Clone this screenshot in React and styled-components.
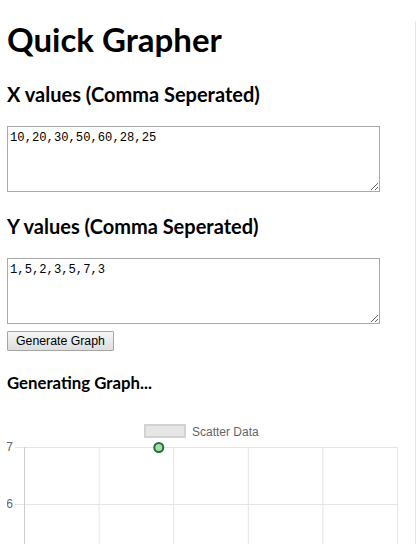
import React from 'react';
import styled, { createGlobalStyle } from 'styled-components';

const GlobalStyle = createGlobalStyle`
    html, body {
        margin : 0;
        padding : 0;
        overflow : hidden;
        background : #fff;
    }
`

const Page = styled('div')`
    width : 416px;
    height : 100vh;
    box-sizing : border-box;
    padding : 0 0 0 7px;
    border-right : 1px solid #e6e6e6;
    font-family : Lato, "Noto Sans", sans-serif;
    color : #000;
`

const Title = styled('h1')`
    margin : 21px 0 0 0;
    font-size : 33px;
    line-height : 36px;
    font-weight : 700;
`

const Heading = styled('h2')`
    margin : ${props => props.top}px 0 0 0;
    font-size : 20px;
    line-height : 24px;
    font-weight : 700;
`

const Status = styled('h3')`
    margin : 22px 0 0 0;
    font-size : 16.8px;
    line-height : 20px;
    font-weight : 700;
`

const ValuesInput = styled('textarea')`
    display : block;
    box-sizing : border-box;
    width : 373px;
    height : 66px;
    margin : 20px 0 0 0;
    padding : 3px 2px 2px 2px;
    border : 1px solid #a9a9a9;
    font-family : "Liberation Mono", monospace;
    font-size : 12.2px;
    line-height : 16px;
    color : #000;
    background : #fff;
    outline : none;
`

const Button = styled('button')`
    display : block;
    box-sizing : border-box;
    height : 20px;
    margin : 7px 0 0 0;
    padding : 0 8px;
    border : 1px solid #a6a6a6;
    border-radius : 1px;
    background : linear-gradient(#f6f6f6, #dddddd);
    font-family : "Liberation Sans", Arial, sans-serif;
    font-size : 12.3px;
    line-height : 16px;
    color : #000;
`

const ChartBox = styled('div')`
    margin : 17px 0 0 0;
    width : 392px;
`

const xs = [10, 20, 30, 50, 60, 28, 25];
const ys = [1, 5, 2, 3, 5, 7, 3];

const left = 17;
const right = 390;
const top = 37;
const step = 57;
const height = 136;
const mapX = x => left + (x - 10) * (right - left) / 50;
const mapY = y => top + (7 - y) * step;

function ScatterChart(){
    const yTicks = [7, 6, 5, 4, 3, 2, 1].filter(t => mapY(t) < height);
    const xTicks = [10, 20, 30, 40, 50, 60];
    const points = xs.map((x, i) => ({ x, y : ys[i] })).filter(p => mapY(p.y) < height);
    return(
        <svg width="392" height={height} viewBox={`0 0 392 ${height}`}>
            <rect x="138" y="15" width="40" height="12" fill="#e6e6e6" stroke="#d2d2d2" strokeWidth="2" />
            <text x="185" y="26" fontFamily="Liberation Sans, Arial, sans-serif" fontSize="12" fill="#666">Scatter Data</text>
            {yTicks.map(t => (
                <g key={'y' + t}>
                    <line x1="8" x2={right + 0.5} y1={mapY(t) + 0.5} y2={mapY(t) + 0.5} stroke="#e5e5e5" />
                    <text x="6" y={mapY(t) + 4} textAnchor="end" fontFamily="Liberation Sans, Arial, sans-serif" fontSize="12" fill="#666">{t}</text>
                </g>
            ))}
            {xTicks.map((t, i) => (
                <line key={'x' + t} x1={mapX(t) + 0.5} x2={mapX(t) + 0.5} y1={top} y2={height} stroke={i === 0 ? '#cdcdcd' : '#e5e5e5'} />
            ))}
            {points.map((p, i) => (
                <circle key={i} cx={mapX(p.x) + 0.5} cy={mapY(p.y) + 0.5} r="4.5" fill="#a6dcb3" stroke="#22703a" strokeWidth="2" />
            ))}
        </svg>
    )
}

class App extends React.Component{
    render(){
        return(
            <Page>
                <GlobalStyle />
                <Title>Quick Grapher</Title>
                <Heading top={25}>X values (Comma Seperated)</Heading>
                <ValuesInput defaultValue="10,20,30,50,60,28,25" />
                <Heading top={22}>Y values (Comma Seperated)</Heading>
                <ValuesInput defaultValue="1,5,2,3,5,7,3" />
                <Button>Generate Graph</Button>
                <Status>Generating Graph...</Status>
                <ChartBox>
                    <ScatterChart />
                </ChartBox>
            </Page>
        )
    }
}

export default App
